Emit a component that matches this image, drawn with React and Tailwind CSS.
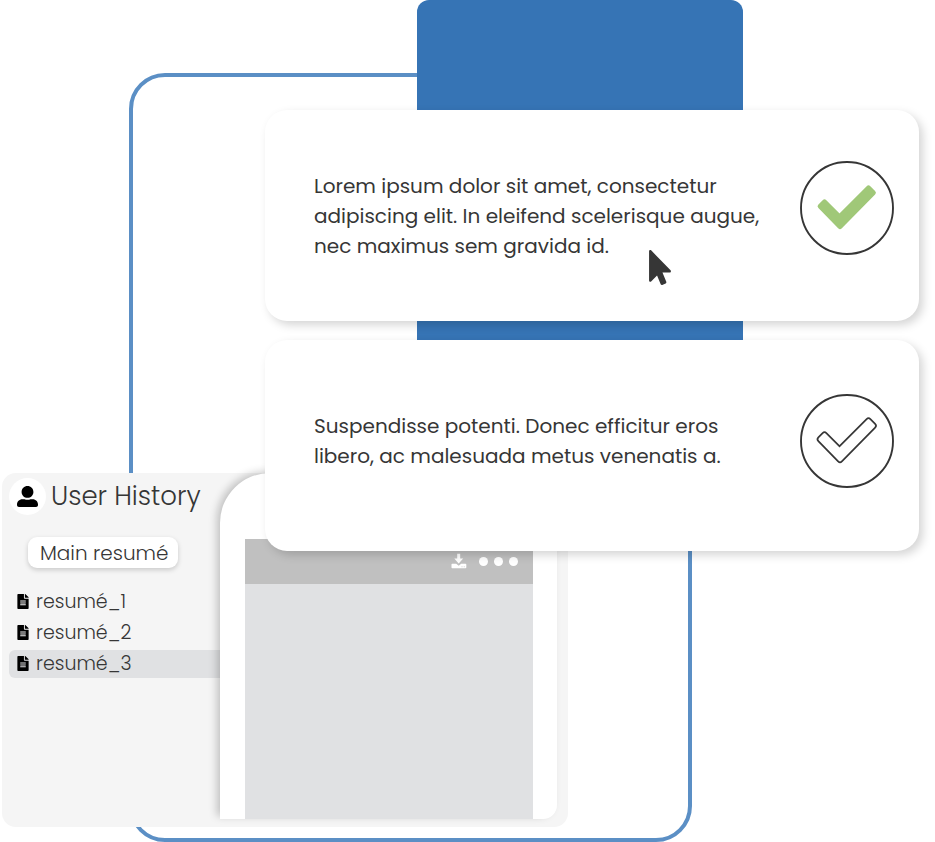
import { FaFileAlt, FaMousePointer, FaUserAlt } from "react-icons/fa";

const CHECK = "20.25,45.25 24.5,41 39.5,56 68.5,27 73.25,31.75 40,65.5";

function CheckCircle({ checked, className }) {
  return (
    <svg viewBox="0 0 94 94" className={`size-[94px] shrink-0 ${className}`}>
      <circle cx="47" cy="47" r="46" fill="#fff" stroke="#363636" strokeWidth="1.9" />
      {checked ? (
        <polygon points={CHECK} fill="#a0c878" stroke="#a0c878" strokeWidth="5.2" strokeLinejoin="round" />
      ) : (
        <>
          <polygon points={CHECK} fill="#363636" stroke="#363636" strokeWidth="7" strokeLinejoin="round" />
          <polygon points={CHECK} fill="#fff" stroke="#fff" strokeWidth="3.6" strokeLinejoin="round" />
        </>
      )}
    </svg>
  );
}

function DownloadIcon() {
  return (
    <svg viewBox="0 0 16 16" className="mb-px h-4 w-4 shrink-0">
      <path d="M6.2 0.7h3v4.8h3L7.7 10.5 3.3 5.5h2.9z" fill="#fff" />
      <path d="M1.3 10.7h3.9l2.5 2 2.5-2h4.300q.8 0 .8.8v3q0 .8-.8.8H1.300q-.8 0-.8-.8v-3q0-.8.8-.8z" fill="#fff" />
      <circle cx="11" cy="13.7" r=".5" fill="#c0c0c0" />
      <circle cx="13.2" cy="13.7" r=".5" fill="#c0c0c0" />
    </svg>
  );
}

function Card({ className, children }) {
  return (
    <section
      className={`ml-[265px] flex h-[211px] w-[654px] items-start justify-between rounded-[22px] bg-white pr-[25px] pl-[49px] shadow-[4px_4px_10px_rgba(0,0,0,0.17)] ${className}`}
    >
      {children}
    </section>
  );
}

function FileRow({ name, active }) {
  return (
    <li className={`flex h-7 items-center rounded-l-[6px] pl-2 ${active ? "bg-[#e0e1e3]" : ""}`}>
      <FaFileAlt className="mb-px h-[15px] w-3 text-black" />
      <span className="pb-px pl-[7px] text-[19px] leading-[27px] font-light">{name}</span>
    </li>
  );
}

export default function App() {
  return (
    <main className="grid h-[842px] w-[935px] grid-cols-1 grid-rows-1 items-start justify-items-start overflow-hidden bg-white font-['Poppins','Inter',sans-serif] text-[#363636] [font-feature-settings:'cv11'] [&>*]:col-start-1 [&>*]:row-start-1">
      <div className="mt-[73px] ml-[129px] h-[769px] w-[563px] rounded-[36px] border-4 border-[#5b8fc5]" />
      <div className="ml-[417px] h-[450px] w-[326px] rounded-t-[12px] bg-[#3674b5]" />

      <section className="mt-[473px] ml-[2px] flex h-[354px] w-[566px] rounded-[14px] bg-[#f5f5f5]">
        <aside className="w-[218px] pt-[5px] pl-[7px]">
          <header className="flex h-9 items-center">
            <div className="flex size-[37px] shrink-0 items-center justify-center rounded-full bg-white">
              <FaUserAlt className="size-[21px] text-black" />
            </div>
            <h1 className="pl-[5px] text-[26px] leading-8 font-light whitespace-nowrap">
              User History
            </h1>
          </header>
          <button className="mt-[23px] ml-[19px] flex h-[31px] w-[150px] items-center rounded-[9px] bg-white pl-3 text-[20px] leading-[31px] font-light whitespace-nowrap shadow-[0_2px_5px_rgba(0,0,0,0.18)]">
            <span className="pt-px">Main resumé</span>
          </button>
          <ul className="mt-5 flex flex-col gap-[3px]">
            <FileRow name="resumé_1" />
            <FileRow name="resumé_2" />
            <FileRow name="resumé_3" active />
          </ul>
        </aside>
        <div className="flex h-[346px] w-[337px] flex-col rounded-tl-[50px] rounded-br-[14px] bg-white pt-[66px] pr-6 pl-[25px] shadow-[-4px_-2px_8px_-1px_rgba(0,0,0,0.22)]">
          <div className="flex h-[45px] shrink-0 items-center justify-end bg-[#c0c0c0] pr-[15px]">
            <DownloadIcon />
            <div className="ml-3 flex gap-[6px]">
              <span className="size-[9px] rounded-full bg-white" />
              <span className="size-[9px] rounded-full bg-white" />
              <span className="size-[9px] rounded-full bg-white" />
            </div>
          </div>
          <div className="flex-1 bg-[#e0e1e3]" />
        </div>
      </section>

      <Card className="mt-[110px]">
        <p className="pt-[61px] text-[20px] leading-[30px] whitespace-nowrap">
          Lorem ipsum dolor sit amet, consectetur
          <br />
          adipiscing elit. In eleifend scelerisque augue,
          <br />
          nec maximus sem gravida id.
        </p>
        <CheckCircle checked className="mt-[51px]" />
      </Card>
      <Card className="mt-[340px]">
        <p className="pt-[71px] text-[20px] leading-[30px] whitespace-nowrap">
          Suspendisse potenti. Donec efficitur eros
          <br />
          libero, ac malesuada metus venenatis a.
        </p>
        <CheckCircle className="mt-[54px]" />
      </Card>

      <FaMousePointer className="mt-[250px] ml-[649px] h-[35px] w-[22px]" />
    </main>
  );
}
